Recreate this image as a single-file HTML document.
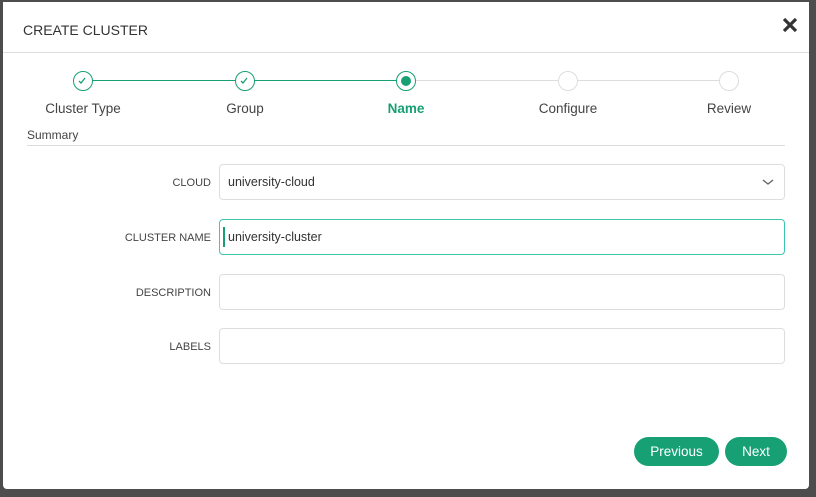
<!DOCTYPE html>
<html><head><style>
*{box-sizing:border-box;margin:0;padding:0}
body{width:816px;height:497px;background:#4d4d4d;font-family:"Liberation Sans",sans-serif;position:relative;overflow:hidden}
.m{position:absolute;left:3px;top:2px;width:806px;height:487px;background:#fff;border-radius:0 0 4px 4px}
.t{position:absolute;left:20px;top:20px;font-size:14px;color:#333}
.x{position:absolute;left:778px;top:14px}
.hr{position:absolute;left:0;right:0;top:50px;border-top:1px solid #ddd}
.line{position:absolute;top:78px;height:1px}
.c{position:absolute;top:69px;width:20px;height:20px;border-radius:50%;border:1.5px solid #ddd;background:#fff}
.c.g{border-color:#17a074}
.lab{position:absolute;top:99px;font-size:13.5px;color:#444;transform:translateX(-50%);white-space:nowrap}
.sum{position:absolute;left:24px;top:126px;font-size:12px;color:#444}
.hr2{position:absolute;left:24px;width:758px;top:143px;border-top:1px solid #ddd}
.fl{position:absolute;right:598px;font-size:11px;color:#444;text-align:right}
.in{position:absolute;left:216px;width:566px;height:36px;border:1px solid #ddd;border-radius:4px;font-size:12.5px;color:#333;padding:10px 0 0 8px}
.btn{position:absolute;top:435px;height:29px;border-radius:15px;background:#17a074;color:#fff;font-size:13.5px;text-align:center;line-height:29px}
</style></head><body>
<div class="m">
<div class="t">CREATE CLUSTER</div>
<svg class="x" width="18" height="18" viewBox="0 0 18 18"><path d="M3 3L15 15M15 3L3 15" stroke="#333" stroke-width="3.2"/></svg>
<div class="hr"></div>
<div class="line" style="left:80px;width:322px;background:#17a074"></div>
<div class="line" style="left:402px;width:324px;background:#ddd"></div>
<div class="c g" style="left:70px"><svg width="17" height="17" viewBox="0 0 17 17"><path d="M5 9l2 2 4-5" stroke="#17a074" stroke-width="1.3" fill="none"/></svg></div>
<div class="c g" style="left:232px"><svg width="17" height="17" viewBox="0 0 17 17"><path d="M5 9l2 2 4-5" stroke="#17a074" stroke-width="1.3" fill="none"/></svg></div>
<div class="c g" style="left:393px"><div style="position:absolute;left:3.5px;top:3.5px;width:10px;height:10px;border-radius:50%;background:#17a074"></div></div>
<div class="c" style="left:555px"></div>
<div class="c" style="left:716px"></div>
<div class="lab" style="left:80px">Cluster Type</div>
<div class="lab" style="left:242px">Group</div>
<div class="lab" style="left:403px;color:#17a074;font-weight:bold">Name</div>
<div class="lab" style="left:565px">Configure</div>
<div class="lab" style="left:726px">Review</div>
<div class="sum">Summary</div>
<div class="hr2"></div>
<div class="fl" style="top:175px">CLOUD</div>
<div class="in" style="top:162px">university-cloud<svg style="position:absolute;right:10px;top:14px" width="12" height="7" viewBox="0 0 12 7"><path d="M1 1l5 4 5-4" stroke="#666" stroke-width="1.4" fill="none"/></svg></div>
<div class="fl" style="top:230px">CLUSTER NAME</div>
<div class="in" style="top:217px;border-color:#3cc8b0"><div style="position:absolute;left:3px;top:7px;width:2px;height:20px;background:#17a074"></div>university-cluster</div>
<div class="fl" style="top:285px">DESCRIPTION</div>
<div class="in" style="top:272px"></div>
<div class="fl" style="top:339px">LABELS</div>
<div class="in" style="top:326px"></div>
<div class="btn" style="left:631px;width:85px">Previous</div>
<div class="btn" style="left:722px;width:62px">Next</div>
</div>
</body></html>
